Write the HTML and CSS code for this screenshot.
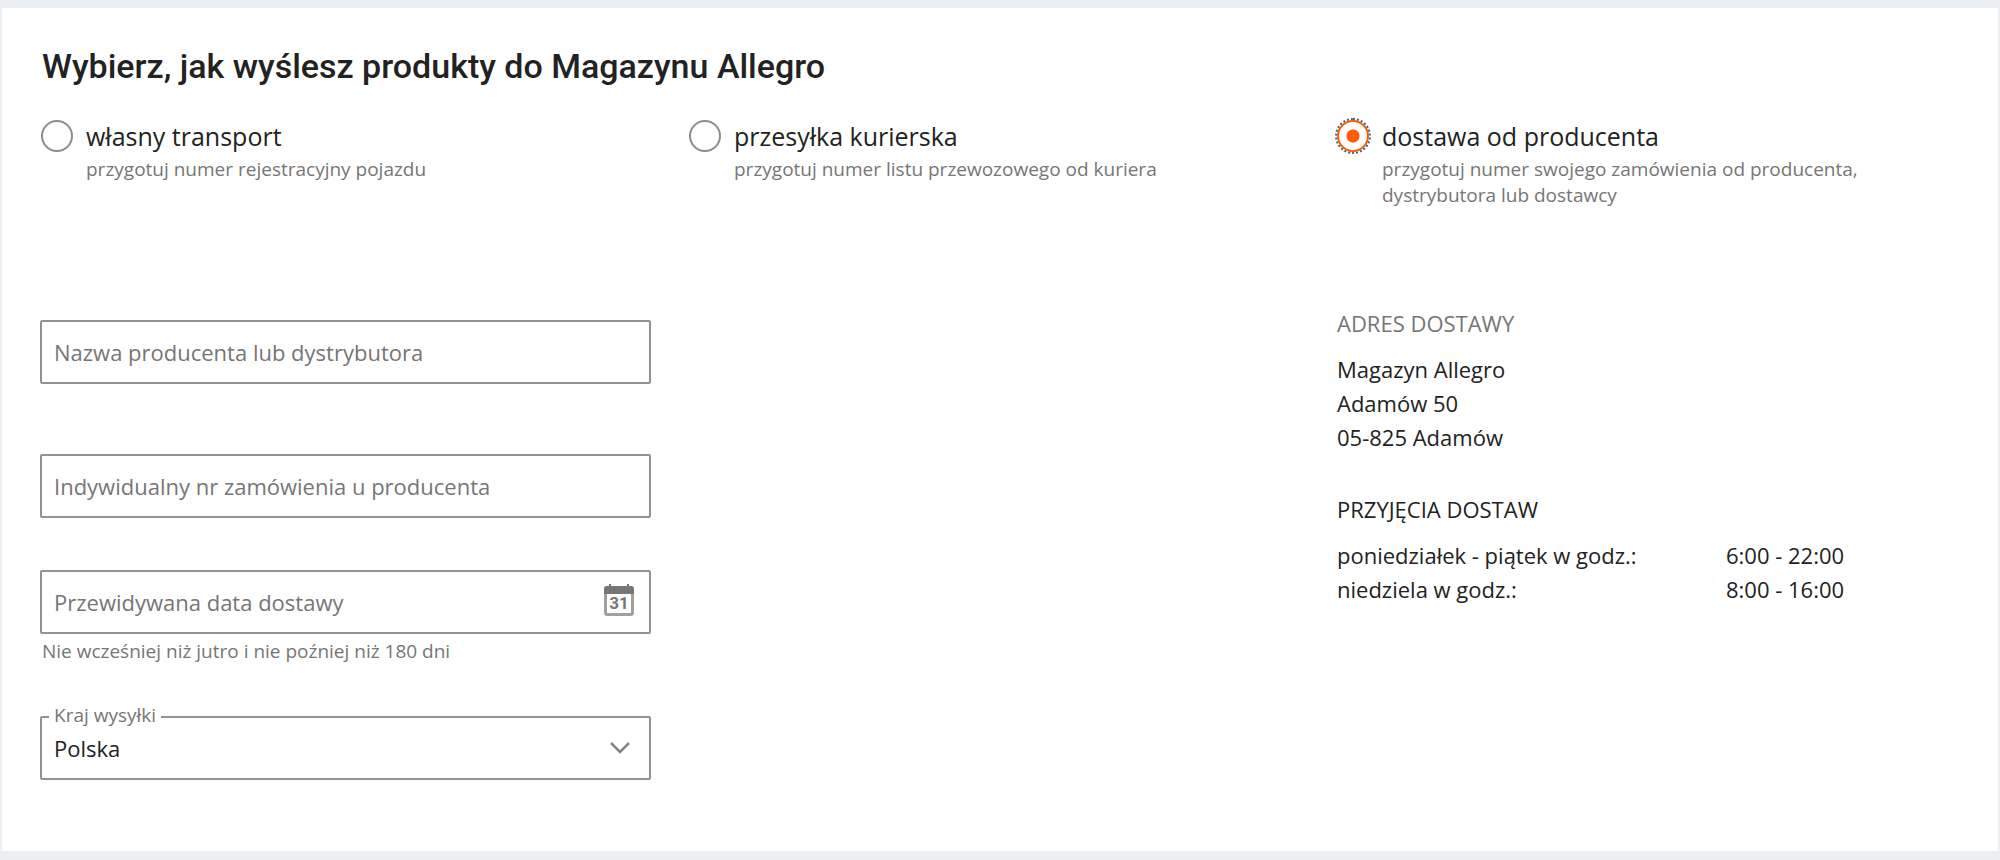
FILE: index.html
```
<!DOCTYPE html>
<html lang="pl">
  <head>
    <meta charset="UTF-8" />
    <meta name="viewport" content="width=device-width, initial-scale=1" />
    <title>Magazyn Allegro - sposób wysyłki</title>
    <link rel="stylesheet" href="styles.css">
  </head>
  <body>
    <form class="card">
      <h2 class="title">Wybierz, jak wyślesz produkty do Magazynu Allegro</h2>

      <div class="options">
        <label class="option">
          <input type="radio" name="transport" value="own" />
          <span class="option-text">
            <span class="option-name">własny transport</span>
            <span class="hint">przygotuj numer rejestracyjny pojazdu</span>
          </span>
        </label>
        <label class="option">
          <input type="radio" name="transport" value="courier" />
          <span class="option-text">
            <span class="option-name">przesyłka kurierska</span>
            <span class="hint">przygotuj numer listu przewozowego od kuriera</span>
          </span>
        </label>
        <label class="option">
          <input type="radio" name="transport" value="producer" checked />
          <span class="option-text">
            <span class="option-name">dostawa od producenta</span>
            <span class="hint">przygotuj numer swojego zamówienia od producenta, dystrybutora lub dostawcy</span>
          </span>
        </label>
      </div>

      <div class="details">
        <div class="fields">
          <div class="field">
            <input type="text" id="producer" aria-label="Nazwa producenta lub dystrybutora" placeholder="Nazwa producenta lub dystrybutora" />
          </div>
          <div class="field">
            <input type="text" id="orderNumber" aria-label="Indywidualny nr zamówienia u producenta" placeholder="Indywidualny nr zamówienia u producenta" />
          </div>
          <div class="field date">
            <input type="text" id="deliveryDate" aria-label="Przewidywana data dostawy" aria-describedby="dateHint" placeholder="Przewidywana data dostawy" />
            <button type="button" class="calendar" aria-label="Wybierz datę">
              <svg width="30" height="32" viewBox="0 0 30 32">
                <path d="M6 0v4M24 0v4" stroke="#767676" stroke-width="2" />
                <rect x="1.5" y="3.5" width="27" height="27" rx="2" fill="none" stroke="#a0a0a0" stroke-width="3" />
                <path d="M0 10V5q0-3 3-3h24q3 0 3 3v5z" fill="#767676" />
                <text x="15" y="25" text-anchor="middle">31</text>
              </svg>
            </button>
            <p class="hint" id="dateHint">Nie wcześniej niż jutro i nie poźniej niż 180 dni</p>
          </div>
          <div class="field country">
            <label for="country">Kraj wysyłki</label>
            <select id="country">
              <option>Polska</option>
            </select>
            <svg class="arrow" width="22" height="14" viewBox="0 0 22 14">
              <path d="M2 2l9 9 9-9" fill="none" stroke="#858585" stroke-width="2.5" />
            </svg>
          </div>
        </div>

        <div class="info">
          <h3 class="muted">ADRES DOSTAWY</h3>
          <address>
            Magazyn Allegro<br>
            Adamów 50<br>
            05-825 Adamów
          </address>
          <h3>PRZYJĘCIA DOSTAW</h3>
          <table>
            <tr>
              <td>poniedziałek - piątek w godz.:</td>
              <td>6:00 - 22:00</td>
            </tr>
            <tr>
              <td>niedziela w godz.:</td>
              <td>8:00 - 16:00</td>
            </tr>
          </table>
        </div>
      </div>
    </form>
  </body>
</html>
```
FILE: styles.css
```
* {
  box-sizing: border-box;
}

body {
  margin: 0;
  padding: 8px 2px 9px;
  background: #ebeff2;
  color: #222;
  font-family: "Open Sans", sans-serif;
  font-size: 22px;
  line-height: 34px;
}

.card {
  padding: 37px 51px 71px 38px;
  background: #fff;
}

.title {
  margin: 0 0 29px 2px;
  font-family: Roboto, sans-serif;
  font-size: 34px;
  font-weight: 500;
  line-height: 42px;
}

.options,
.details {
  display: grid;
  grid-template-columns: repeat(3, 1fr);
  gap: 37px;
}

.option {
  display: flex;
  gap: 13px;
  padding-left: 1px;
}

.option input {
  appearance: none;
  flex: none;
  width: 32px;
  height: 32px;
  margin: 4px 0 0;
  border: 2px solid #8c8c8c;
  border-radius: 50%;
}

.option input:checked {
  border-color: #ff5a00;
  outline: 2px dotted #3d6a7c;
  background: radial-gradient(circle, #ff5a00 6px, #fff 7px);
}

.option-name {
  display: block;
  font-size: 25px;
  line-height: 40px;
}

.hint {
  display: block;
  margin: 0;
  color: #767676;
  font-size: 19px;
  line-height: 26px;
}

.option-text {
  max-width: 500px;
}

.details {
  margin-top: 112px;
}

.field {
  position: relative;
  margin-bottom: 70px;
}

.field input,
.field select {
  display: block;
  appearance: none;
  width: 100%;
  height: 64px;
  padding: 0 60px 0 12px;
  border: 2px solid #929292;
  border-radius: 2px;
  background: #fff;
  color: #222;
  font: inherit;
}

.field input::placeholder {
  color: #767676;
  opacity: 1;
}

.field:nth-child(2),
.date {
  margin-bottom: 52px;
}

.date .hint {
  padding: 4px 2px 0;
}

.calendar {
  position: absolute;
  top: 14px;
  right: 17px;
  padding: 0;
  border: 0;
  background: none;
}

.calendar svg,
.arrow {
  display: block;
}

.calendar text {
  fill: #767676;
  font: bold 17px Roboto, sans-serif;
}

.country {
  margin: 0;
}

.country label {
  position: absolute;
  top: -14px;
  left: 9px;
  padding: 0 5px;
  background: #fff;
  color: #767676;
  font-size: 19px;
  line-height: 26px;
}

.arrow {
  position: absolute;
  top: 25px;
  right: 20px;
  pointer-events: none;
}

.info {
  grid-column: 3;
  padding-left: 1px;
}

.info h3 {
  margin: 0 0 12px;
  font-size: 22px;
  font-weight: 400;
}

.info .muted {
  margin-top: -14px;
  color: #767676;
}

address {
  margin-bottom: 38px;
  font-style: normal;
}

table {
  border-collapse: collapse;
}

td {
  padding: 0;
}

td:first-child {
  width: 389px;
}
```
